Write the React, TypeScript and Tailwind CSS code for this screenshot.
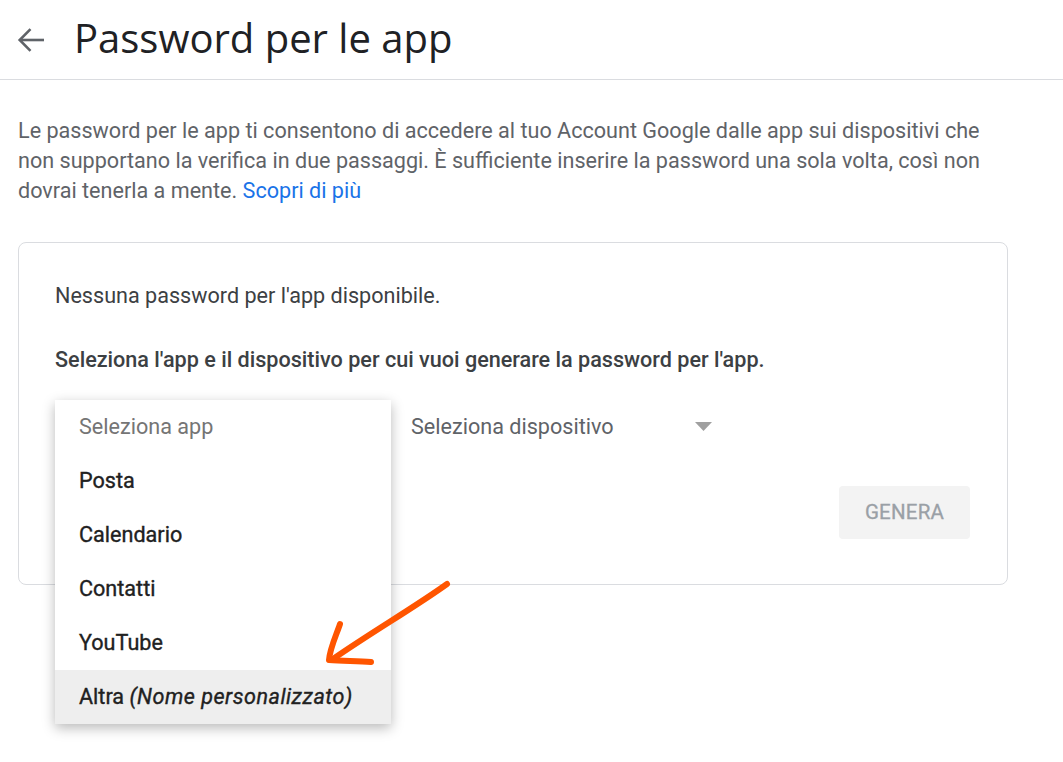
import React from "react";

export default function App() {
  const items = ["Posta", "Calendario", "Contatti", "YouTube"];
  return (
    <div
      className="relative w-[1063px] h-[762px] bg-white overflow-hidden"
      style={{ fontFamily: "Roboto, 'Liberation Sans', sans-serif" }}
    >
      {/* Header */}
      <div className="h-[80px] border-b border-[#dadce0] flex items-center">
        <div className="w-[74px] flex items-center pl-[17px]">
          <svg width="28" height="26" viewBox="0 0 28 26" fill="none" stroke="#5f6368" strokeWidth="2.6">
            <path d="M27 13H3" />
            <path d="M13.5 2.2L2.7 13l10.8 10.8" />
          </svg>
        </div>
        <h1
          className="text-[40px] leading-none text-[#202124] -mt-[3px]"
          style={{ fontFamily: "'Open Sans', Roboto, sans-serif" }}
        >
          Password per le app
        </h1>
      </div>

      {/* Description */}
      <p className="pl-[18px] w-[1063px] mt-[36px] text-[21.6px] leading-[30px] text-[#5f6368] whitespace-nowrap">
        Le password per le app ti consentono di accedere al tuo Account Google dalle app sui dispositivi che
        <br />
        non supportano la verifica in due passaggi. È sufficiente inserire la password una sola volta, così non
        <br />
        dovrai tenerla a mente. <span className="text-[#1a73e8]">Scopri di più</span>
      </p>

      {/* Card */}
      <div className="relative ml-[18px] mt-[36px] w-[990px] h-[343px] border border-[#dadce0] rounded-[8px] pl-[36px] pr-[37px] pt-[38px]">
        <div className="text-[21.6px] leading-[30px] text-[#3c4043]">
          Nessuna password per l'app disponibile.
        </div>
        <div className="mt-[34px] text-[21.6px] leading-[30px] font-medium text-[#3c4043]">
          Seleziona l'app e il dispositivo per cui vuoi generare la password per l'app.
        </div>
        <div className="mt-[25px] h-[54px] flex items-center">
          <div className="w-[356px]" />
          <div className="w-[306px] flex items-center justify-between pr-[5px]">
            <span className="text-[21.6px] text-[#5f6368]">Seleziona dispositivo</span>
            <svg width="17" height="10" viewBox="0 0 17 10">
              <polygon points="0,0 17,0 8.5,9" fill="#a0a0a0" />
            </svg>
          </div>
        </div>
        <div className="mt-[32px] flex justify-end">
          <div className="w-[131px] h-[53px] rounded-[4px] bg-[#f3f3f3] flex items-center justify-center text-[20.5px] text-[#9aa0a6] tracking-[0.2px] [-webkit-text-stroke:0.3px_#9aa0a6]">
            GENERA
          </div>
        </div>
      </div>

      {/* Dropdown menu */}
      <div className="absolute left-[55px] top-[400px] w-[336px] bg-white shadow-[0_4px_12px_rgba(0,0,0,0.28)]">
        <div className="h-[54px] flex items-center pl-[24px] text-[21.6px] text-[#757575]">
          Seleziona app
        </div>
        {items.map((it) => (
          <div
            key={it}
            className="h-[54px] flex items-center pl-[24px] text-[21.6px] text-[#212121] [-webkit-text-stroke:0.35px_#212121]"
          >
            {it}
          </div>
        ))}
        <div className="h-[54px] flex items-center pl-[24px] text-[21.6px] text-[#212121] bg-[#eeeeee] [-webkit-text-stroke:0.35px_#212121]">
          Altra&nbsp;<span className="italic tracking-[0.5px]">(Nome personalizzato)</span>
        </div>
      </div>

      {/* Orange arrow annotation */}
      <svg className="absolute left-0 top-0 pointer-events-none" width="1063" height="762">
        <path
          d="M447 584 C 415 607, 372 632, 333 659"
          stroke="#ff5500"
          strokeWidth="6"
          fill="none"
          strokeLinecap="round"
        />
        <path
          d="M340 624 C 336 636, 330 648, 329 660 C 343 661, 357 661, 371 662"
          stroke="#ff5500"
          strokeWidth="6"
          fill="none"
          strokeLinecap="round"
          strokeLinejoin="round"
        />
      </svg>
    </div>
  );
}
